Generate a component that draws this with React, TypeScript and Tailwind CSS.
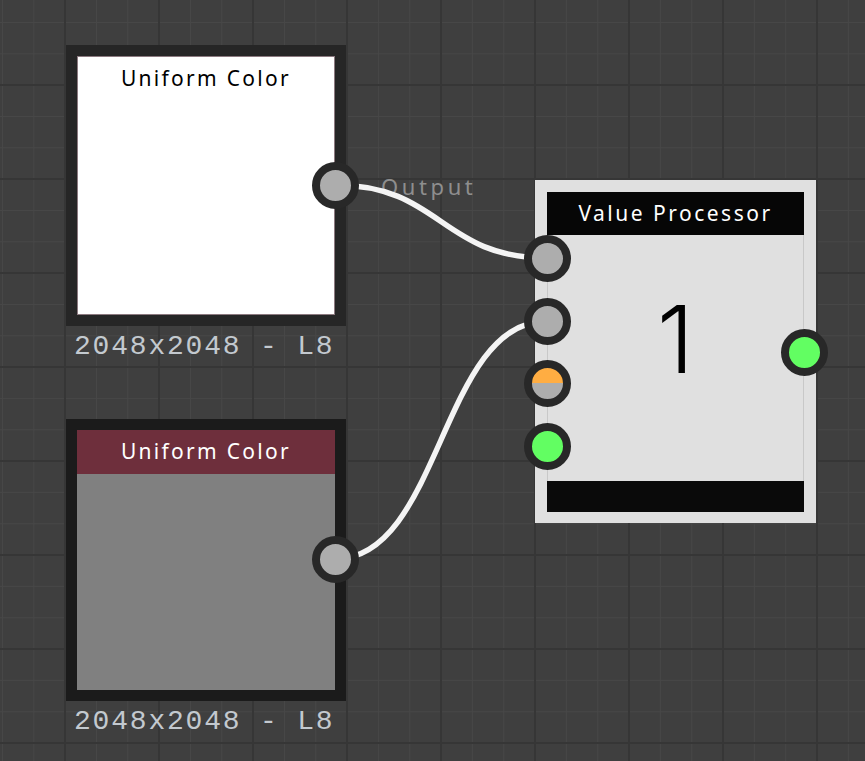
import React from 'react';

type SocketProps = {
  x: number;
  y: number;
  kind?: 'gray' | 'green' | 'split';
};

const Socket = ({ x, y, kind = 'gray' }: SocketProps) => {
  const fill =
    kind === 'green'
      ? 'bg-[#62fe62]'
      : kind === 'split'
        ? 'bg-[linear-gradient(#ffad42_50%,#adadad_50%)]'
        : 'bg-[#adadad]';
  return (
    <div
      className={`absolute w-[47px] h-[47px] -ml-[23.5px] -mt-[23.5px] rounded-full border-8 border-[#282828] ${fill}`}
      style={{ left: x, top: y }}
    />
  );
};

const Label = ({ children }: { children: React.ReactNode }) => (
  <div className="mt-[4px] pl-[8px] text-[28px] leading-[34px] tracking-[1.8px] text-[#c3c9cf] font-['Liberation_Mono',monospace]">
    {children}
  </div>
);

const App = () => {
  return (
    <div className="relative w-[865px] h-[761px] overflow-hidden bg-[#3f3f3f] [background-image:linear-gradient(90deg,#363636_2px,transparent_2px),linear-gradient(#363636_2px,transparent_2px),linear-gradient(90deg,#474747_1px,transparent_1px),linear-gradient(#474747_1px,transparent_1px)] [background-size:94px_94px,94px_94px,31.333px_31.333px,31.333px_31.333px] [background-position:64px_84px,64px_84px,2px_22px,2px_22px] font-['Noto_Sans',sans-serif]">
      {/* white uniform color node */}
      <div className="absolute left-[66px] top-[45px] flex flex-col">
        <div className="w-[280px] h-[281px] bg-[#262626] p-[11px]">
          <div className="w-full h-full bg-white border border-[#8c7a80] flex flex-col items-center">
            <div className="mt-[6px] text-[21px] leading-[30px] tracking-[2.3px] text-black">Uniform Color</div>
          </div>
        </div>
        <Label>2048x2048 - L8</Label>
      </div>

      {/* gray uniform color node */}
      <div className="absolute left-[66px] top-[419px] flex flex-col">
        <div className="w-[280px] h-[282px] bg-[#1b1b1b] p-[11px]">
          <div className="w-full h-full flex flex-col">
            <div className="h-[44px] bg-[#6e2f3c] flex items-center justify-center text-[21px] tracking-[2.3px] text-white">
              Uniform Color
            </div>
            <div className="flex-1 bg-[#808080]" />
          </div>
        </div>
        <Label>2048x2048 - L8</Label>
      </div>

      {/* value processor */}
      <div className="absolute left-[535px] top-[180px] w-[281px] h-[343px] bg-[#e0e0e0] px-[12px] pt-[12px] pb-[11px] flex flex-col">
        <div className="h-[43px] bg-[#060606] flex items-center justify-center text-[21px] tracking-[2.5px] text-white">
          Value Processor
        </div>
        <div className="flex-1 border-x border-[#c8c8c8] flex justify-center">
          <div className="mt-[44px] text-[94px] leading-[120px] font-[350] text-black font-['Inter',sans-serif]">1</div>
        </div>
        <div className="h-[31px] bg-[#0a0a0a]" />
      </div>

      <div className="absolute left-[381px] top-[170px] text-[22px] tracking-[3.6px] text-[#8e8e8e]">Output</div>

      <svg className="absolute inset-0 w-full h-full pointer-events-none" viewBox="0 0 865 761">
        <path d="M335 185 C441 185 441 258 547 258" fill="none" stroke="#f4f4f4" strokeWidth="5.5" />
        <path d="M335 559 C441 559 441 321 547 321" fill="none" stroke="#f4f4f4" strokeWidth="5.5" />
      </svg>

      <Socket x={335} y={185} />
      <Socket x={335} y={559} />
      <Socket x={547} y={258} />
      <Socket x={547} y={321} />
      <Socket x={547} y={383} kind="split" />
      <Socket x={547} y={446} kind="green" />
      <Socket x={804} y={352} kind="green" />
    </div>
  );
};

export default App;
